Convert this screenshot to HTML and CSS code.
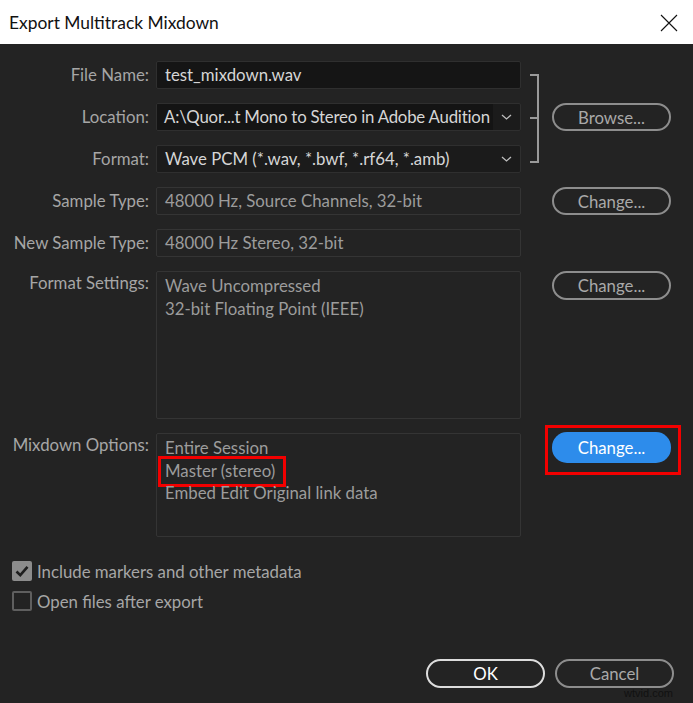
FILE: index.html
```html
<!DOCTYPE html>
<html lang="en">
<head>
  <meta charset="UTF-8">
  <title>Export Multitrack Mixdown</title>
  <link rel="stylesheet" href="styles.css">
</head>
<body>
  <div class="dialog">
    <!-- Title bar -->
    <div class="titlebar">
      <span class="title">Export Multitrack Mixdown</span>
      <svg class="close" width="18" height="18" viewBox="0 0 18 18">
        <path d="M1 1 L17 17 M17 1 L1 17" stroke="#111" stroke-width="1.1" fill="none"/>
      </svg>
    </div>

    <div class="body">
      <div class="form">
        <label class="label r1">File Name:</label>
        <div class="field input r1">test_mixdown.wav</div>

        <label class="label r2">Location:</label>
        <div class="field select r2">
          <span class="select-text dark tight">A:\Quor...t Mono to Stereo in Adobe Audition</span>
          <span class="caret">
            <svg width="11" height="6" viewBox="0 0 11 6"><path d="M1 1 L5.5 5 L10 1" stroke="#bdbdbd" stroke-width="1.3" fill="none"/></svg>
          </span>
        </div>

        <label class="label r3">Format:</label>
        <div class="field select r3">
          <span class="select-text">Wave PCM (*.wav, *.bwf, *.rf64, *.amb)</span>
          <span class="caret">
            <svg width="11" height="6" viewBox="0 0 11 6"><path d="M1 1 L5.5 5 L10 1" stroke="#bdbdbd" stroke-width="1.3" fill="none"/></svg>
          </span>
        </div>

        <div class="bracket"></div>
        <button class="btn r2 col-btn">Browse...</button>

        <label class="label r4">Sample Type:</label>
        <div class="field disabled r4">48000 Hz, Source Channels, 32-bit</div>
        <button class="btn r4 col-btn">Change...</button>

        <label class="label r5">New Sample Type:</label>
        <div class="field disabled r5">48000 Hz Stereo, 32-bit</div>

        <label class="label top r6">Format Settings:</label>
        <div class="box r6">
          <div>Wave Uncompressed</div>
          <div>32-bit Floating Point (IEEE)</div>
        </div>
        <button class="btn r6 col-btn top tall">Change...</button>

        <label class="label top r7">Mixdown Options:</label>
        <div class="box r7">
          <div>Entire Session</div>
          <div><span class="mark">Master (stereo)</span></div>
          <div>Embed Edit Original link data</div>
        </div>
        <div class="highlight r7 col-btn">
          <button class="btn primary">Change...</button>
        </div>
      </div>

      <div class="checks">
        <div class="check-row">
          <span class="checkbox checked">
            <svg width="20" height="20" viewBox="0 0 20 20"><path d="M4.5 10.5 L8.3 14.2 L15.5 5.8" stroke="#1e1e1e" stroke-width="2.6" fill="none"/></svg>
          </span>
          <span>Include markers and other metadata</span>
        </div>
        <div class="check-row">
          <span class="checkbox"></span>
          <span>Open files after export</span>
        </div>
      </div>

      <div class="footer">
        <button class="btn ok">OK</button>
        <button class="btn">Cancel</button>
      </div>
      <span class="watermark">wtvid.com</span>
    </div>
  </div>
</body>
</html>
```

FILE: styles.css
```css
/* Page */
html, body {
  margin: 0;
  height: 100%;
  background: #232323;
}

.dialog {
  width: 693px;
  height: 703px;
  display: flex;
  flex-direction: column;
  font-family: Lato, "Open Sans", sans-serif;
}

/* Title bar */
.titlebar {
  height: 44px;
  background: #ffffff;
  display: flex;
  align-items: center;
  justify-content: space-between;
  padding: 0 15px 0 9px;
}

.title {
  font-family: Lato, "Open Sans", sans-serif;
  font-size: 17.4px;
  color: #111;
}

.close {
  margin-top: 1px;
}

/* Body */
.body {
  position: relative;
  flex: 1;
  background: #232323;
  padding-top: 17px;
}

.form {
  display: grid;
  grid-template-columns: 156px 365px 31px 119px;
  grid-template-rows: 28px 28px 28px 28px 28px 148px 104px;
  row-gap: 14px;
  font-size: 16.8px;
}

.r1 { grid-row: 1; }
.r2 { grid-row: 2; }
.r3 { grid-row: 3; }
.r4 { grid-row: 4; }
.r5 { grid-row: 5; }
.r6 { grid-row: 6; }
.r7 { grid-row: 7; }

.label {
  grid-column: 1;
  padding-right: 7px;
  text-align: right;
  color: #a6a6a6;
  line-height: 28px;
}

.label.top {
  line-height: 24px;
}

.field {
  grid-column: 2;
  box-sizing: border-box;
  border: 1px solid #2f2f2f;
  border-radius: 2px;
  padding: 0 8px;
  line-height: 26px;
  white-space: nowrap;
  overflow: hidden;
}

.input {
  background: #151515;
  color: #d6d6d6;
}

.select {
  display: flex;
  padding: 0;
  background: #1b1b1b;
  color: #d6d6d6;
}

.select-text {
  flex: 1;
  padding-left: 8px;
  overflow: hidden;
}

.select-text.dark {
  background: #141414;
}

/* long path squeezed to fit the combo box */
.select-text.tight {
  letter-spacing: -0.2px;
  padding-left: 7px;
}

.caret {
  width: 27px;
  flex: none;
  display: flex;
  align-items: center;
  justify-content: center;
}

.disabled {
  background: #232323;
  border-color: #343434;
  color: #9c9c9c;
}

.box {
  grid-column: 2;
  box-sizing: border-box;
  border: 1px solid #343434;
  border-radius: 2px;
  padding: 3px 8px;
  line-height: 22.5px;
  color: #9c9c9c;
}

.mark {
  border: 3px solid #f20000;
  padding: 1px 8px 3px 4px;
  margin-left: -7px;
}

/* Bracket joining name/location/format */
.bracket {
  grid-column: 3;
  grid-row: 1 / span 3;
  position: relative;
  margin: 13px 13px 10px 9px;
  border: 2px solid #9a9a9a;
  border-left: none;
}

.bracket::after {
  content: "";
  position: absolute;
  left: 0;
  right: 0;
  top: 41px;
  border-top: 2px solid #9a9a9a;
}

/* Buttons */
.btn {
  box-sizing: border-box;
  width: 119px;
  height: 28px;
  border: 2px solid #8d8d8d;
  border-radius: 15px;
  background: transparent;
  color: #a9a9a9;
  font-family: Lato, "Open Sans", sans-serif;
  font-size: 16.8px;
  padding: 0;
  cursor: pointer;
}

.col-btn {
  grid-column: 4;
}

.btn.top {
  align-self: start;
}

.btn.tall {
  height: 29px;
}

.highlight {
  align-self: start;
  width: 136px;
  box-sizing: border-box;
  margin: -8px 0 0 -7px;
  border: 3px solid #f20000;
  padding: 4px 7px 9px 4px;
}

.btn.primary {
  height: 31px;
  border: none;
  background: #2d8ceb;
  color: #ffffff;
}

/* Checkboxes */
.checks {
  margin-top: 24px;
  padding-left: 12px;
  display: flex;
  flex-direction: column;
  gap: 10px;
}

.check-row {
  display: flex;
  align-items: center;
  gap: 5px;
  font-size: 16.8px;
  color: #a6a6a6;
  height: 20px;
}

.checkbox {
  box-sizing: border-box;
  width: 20px;
  height: 20px;
  border: 2px solid #5f5f5f;
  border-radius: 2px;
  display: flex;
}

.checkbox.checked {
  border: none;
  background: #8c8c8c;
}

/* Footer */
.footer {
  display: flex;
  justify-content: flex-end;
  gap: 10px;
  padding-right: 19px;
  margin-top: 48px;
}

.footer .btn {
  height: 29px;
}

.btn.ok {
  border-color: #dcdcdc;
  color: #ffffff;
}

.watermark {
  position: absolute;
  right: 20px;
  bottom: 4px;
  font-family: "Liberation Sans", Arial, sans-serif;
  font-size: 11px;
  line-height: 12px;
  color: #111;
}
```
